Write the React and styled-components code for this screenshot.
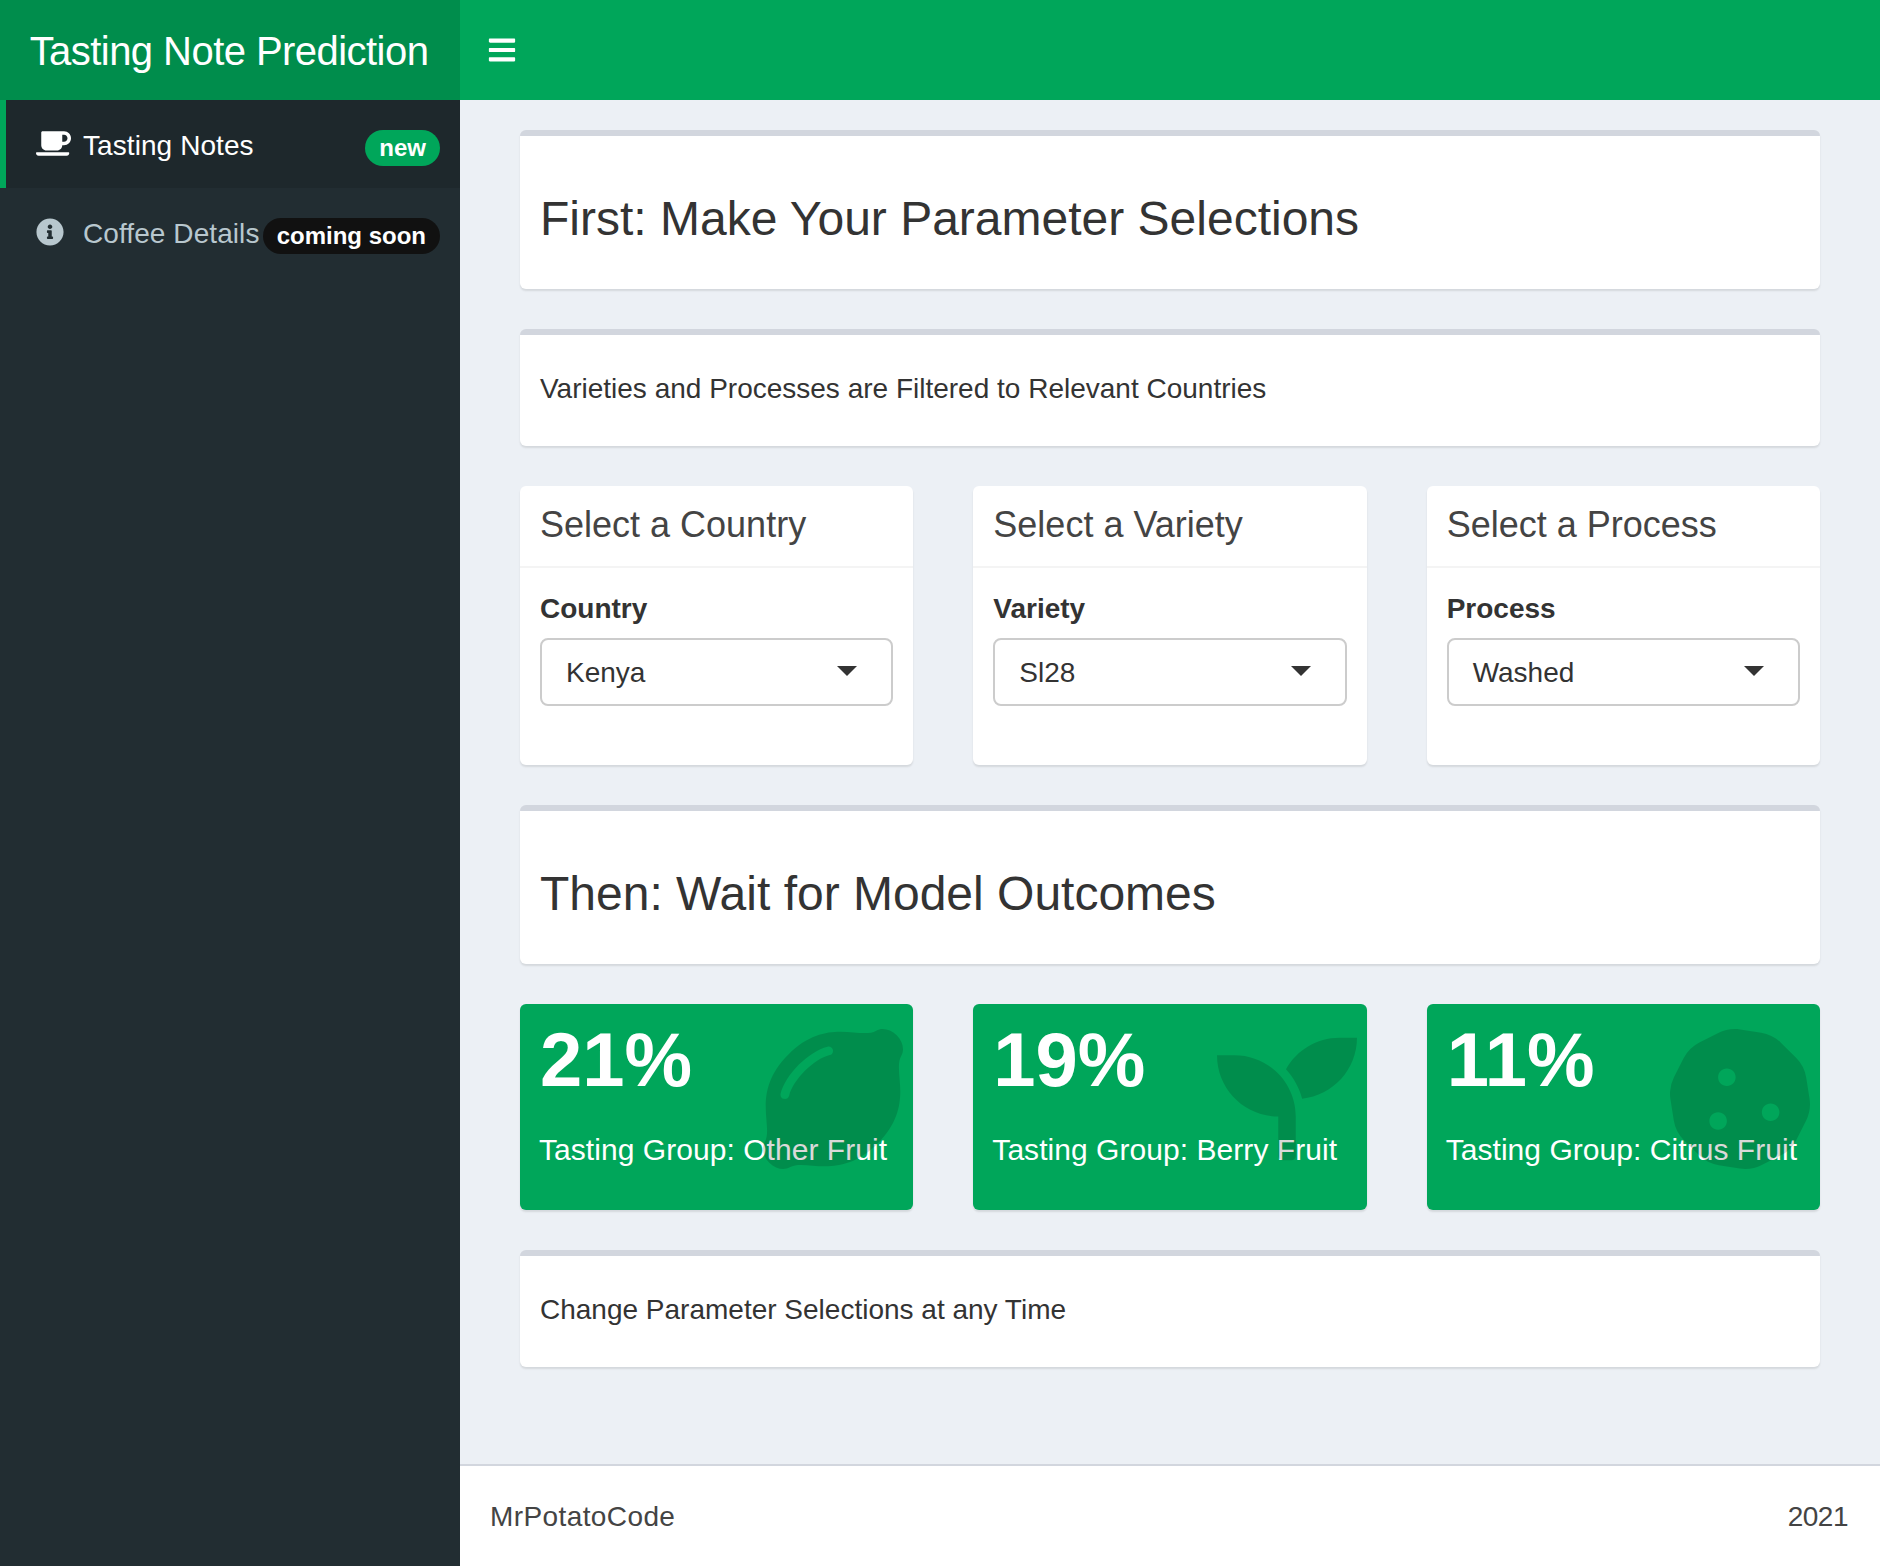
import React from 'react'
import styled, { createGlobalStyle } from 'styled-components'
import { FaBars, FaCoffee, FaInfoCircle, FaLemon, FaSeedling, FaCookie } from 'react-icons/fa'

const GlobalStyle = createGlobalStyle`
  html, body { margin: 0; padding: 0; }
  body {
    font-family: "Liberation Sans", Arial, sans-serif;
    background: #ecf0f5;
    color: #333;
  }
  * { box-sizing: border-box; }
`

const Page = styled.div`
  display: grid;
  grid-template-columns: 460px 1fr;
  grid-template-rows: 100px 1fr;
  height: 1566px;
`
const Logo = styled.div`
  background: #008d4c;
  color: #fff;
  font-size: 40px;
  letter-spacing: -0.55px;
  padding: 2px 2px 0 0;
  display: flex;
  align-items: center;
  justify-content: center;
`
const Navbar = styled.div`
  background: #00a65a;
  color: #fff;
  display: flex;
  align-items: center;
  padding-left: 27px;
  font-size: 30px;
`
const Sidebar = styled.nav`
  background: #222d32;
`
const MenuItem = styled.div`
  height: 88px;
  display: flex;
  align-items: center;
  padding: 0 20px 2px ${p => (p.$active ? '30px' : '36px')};
  font-size: 28px;
  color: ${p => (p.$active ? '#fff' : '#b8c7ce')};
  background: ${p => (p.$active ? '#1e282c' : 'transparent')};
  border-left: ${p => (p.$active ? '6px solid #00a65a' : 'none')};
`
const MenuIcon = styled.span`
  width: 47px;
  flex-shrink: 0;
  display: flex;
  align-items: center;
  font-size: ${p => p.$size}px;
  margin-top: ${p => p.$offset || 0}px;
`
const MenuLabel = styled.span`
  position: relative;
  top: 3px;
  letter-spacing: 0.08px;
`
const MenuBadge = styled.span`
  margin-left: auto;
  height: 36px;
  margin-top: 10px;
  padding: 0 14px;
  border-radius: 18px;
  display: flex;
  align-items: center;
  font-size: 24px;
  font-weight: 700;
  color: #fff;
  background: ${p => p.$bg};
`
const Main = styled.div`
  display: flex;
  flex-direction: column;
`
const Content = styled.main`
  flex: 1;
  padding: 30px 60px 0;
  display: flex;
  flex-direction: column;
  gap: 40px;
`
const Box = styled.section`
  background: #fff;
  border-top: 6px solid #d2d6de;
  border-radius: 6px;
  box-shadow: 0 2px 2px rgba(0, 0, 0, 0.1);
  padding: 20px;
`
const BigTitle = styled.h2`
  margin: 0;
  height: 113px;
  padding-top: 12px;
  display: flex;
  align-items: center;
  font-size: 48px;
  font-weight: 400;
  color: #333;
`
const NoteText = styled.p`
  margin: 0;
  height: 71px;
  padding-bottom: 3px;
  display: flex;
  align-items: center;
  font-size: 28px;
  color: #333;
`
const Row = styled.div`
  display: grid;
  grid-template-columns: repeat(3, 1fr);
  gap: 60px;
`
const Card = styled.section`
  background: #fff;
  border-radius: 6px;
  box-shadow: 0 2px 2px rgba(0, 0, 0, 0.1);
  height: 279px;
`
const CardHeader = styled.h3`
  margin: 0;
  height: 82px;
  padding: 0 20px 3px;
  display: flex;
  align-items: center;
  font-size: 36px;
  font-weight: 400;
  color: #444;
  border-bottom: 2px solid #f4f4f4;
`
const CardBody = styled.div`
  padding: 20px;
`
const FieldLabel = styled.label`
  display: block;
  font-size: 28px;
  font-weight: 700;
  line-height: 42px;
  margin-bottom: 8px;
`
const SelectBox = styled.div`
  height: 68px;
  border: 2px solid #ccc;
  border-radius: 8px;
  padding: 2px 34px 0 24px;
  display: flex;
  align-items: center;
  justify-content: space-between;
  font-size: 28px;
  color: #333;
`
const Caret = styled.span`
  width: 0;
  height: 0;
  margin-top: -5px;
  border-left: 10px solid transparent;
  border-right: 10px solid transparent;
  border-top: 10px solid #333;
`
const ValueBox = styled.section`
  position: relative;
  height: 206px;
  background: #00a65a;
  color: #fff;
  border-radius: 6px;
  box-shadow: 0 2px 2px rgba(0, 0, 0, 0.1);
  padding: 14px 20px;
  overflow: hidden;
`
const Value = styled.h3`
  margin: 0;
  font-size: 76px;
  font-weight: 700;
  line-height: 84px;
`
const ValueText = styled.p`
  margin: 27px 0 0 -1px;
  font-size: 30px;
  line-height: 42px;
  letter-spacing: 0.05px;
  white-space: nowrap;
`
const ValueIcon = styled.span`
  position: absolute;
  top: 25px;
  right: 10px;
  font-size: 140px;
  line-height: 0;
  color: rgba(0, 0, 0, 0.15);
`
const Footer = styled.footer`
  height: 102px;
  background: #fff;
  border-top: 2px solid #d2d6de;
  padding: 2px 32px 0 30px;
  display: flex;
  align-items: center;
  justify-content: space-between;
  font-size: 28px;
  color: #444;
`
const FooterName = styled.span`
  letter-spacing: 0.4px;
`
const FooterYear = styled.span`
  letter-spacing: -0.5px;
`

const selects = [
  { title: 'Select a Country', label: 'Country', value: 'Kenya' },
  { title: 'Select a Variety', label: 'Variety', value: 'Sl28' },
  { title: 'Select a Process', label: 'Process', value: 'Washed' },
]

const outcomes = [
  { value: '21%', text: 'Tasting Group: Other Fruit', icon: <FaLemon /> },
  { value: '19%', text: 'Tasting Group: Berry Fruit', icon: <FaSeedling /> },
  { value: '11%', text: 'Tasting Group: Citrus Fruit', icon: <FaCookie /> },
]

export default function App() {
  return (
    <Page>
      <GlobalStyle />
      <Logo>Tasting Note Prediction</Logo>
      <Navbar><FaBars /></Navbar>
      <Sidebar>
        <MenuItem $active>
          <MenuIcon $size={35}><FaCoffee /></MenuIcon>
          <MenuLabel>Tasting Notes</MenuLabel>
          <MenuBadge $bg="#00a65a">new</MenuBadge>
        </MenuItem>
        <MenuItem>
          <MenuIcon $size={28} $offset={2}><FaInfoCircle /></MenuIcon>
          <MenuLabel>Coffee Details</MenuLabel>
          <MenuBadge $bg="#111">coming soon</MenuBadge>
        </MenuItem>
      </Sidebar>
      <Main>
        <Content>
          <Box><BigTitle>First: Make Your Parameter Selections</BigTitle></Box>
          <Box><NoteText>Varieties and Processes are Filtered to Relevant Countries</NoteText></Box>
          <Row>
            {selects.map(s => (
              <Card key={s.label}>
                <CardHeader>{s.title}</CardHeader>
                <CardBody>
                  <FieldLabel>{s.label}</FieldLabel>
                  <SelectBox>{s.value}<Caret /></SelectBox>
                </CardBody>
              </Card>
            ))}
          </Row>
          <Box><BigTitle>Then: Wait for Model Outcomes</BigTitle></Box>
          <Row>
            {outcomes.map(o => (
              <ValueBox key={o.text}>
                <Value>{o.value}</Value>
                <ValueText>{o.text}</ValueText>
                <ValueIcon>{o.icon}</ValueIcon>
              </ValueBox>
            ))}
          </Row>
          <Box><NoteText>Change Parameter Selections at any Time</NoteText></Box>
        </Content>
        <Footer>
          <FooterName>MrPotatoCode</FooterName>
          <FooterYear>2021</FooterYear>
        </Footer>
      </Main>
    </Page>
  )
}
